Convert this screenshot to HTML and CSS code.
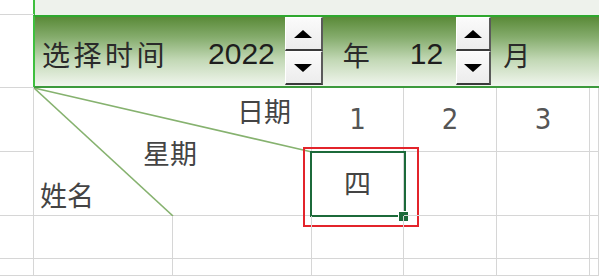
FILE: index.html
```html
<!DOCTYPE html>
<html lang="zh">
<head>
<meta charset="utf-8">
<link rel="stylesheet" href="styles.css">
</head>
<body>
<div class="sheet">
  <div class="cell gutter top"></div>
  <div class="topstrip"></div>

  <div class="cell gutter top"></div>
  <div class="band">
    <span class="label">选择时间</span>
    <span class="num year">2022</span>
    <div class="spin">
      <div class="btn"><span class="tri up"></span></div>
      <div class="btn"><span class="tri down"></span></div>
    </div>
    <span class="unit nian">年</span>
    <span class="num month">12</span>
    <div class="spin">
      <div class="btn"><span class="tri up"></span></div>
      <div class="btn"><span class="tri down"></span></div>
    </div>
    <span class="unit yue">月</span>
  </div>

  <div class="cell gutter"></div>
  <div class="cell diag">
    <svg class="lines" width="278" height="128" viewBox="0 0 278 128">
      <line x1="0" y1="0" x2="278" y2="64" />
      <line x1="0" y1="0" x2="139" y2="128" />
    </svg>
    <span class="htext ri">日期</span>
    <span class="htext xq">星期</span>
    <span class="htext xm">姓名</span>
  </div>
  <div class="cell day">1</div>
  <div class="cell day">2</div>
  <div class="cell day">3</div>
  <div class="cell"></div>

  <div class="cell gutter"></div>
  <div class="cell selected">
    <span class="val">四</span>
    <div class="redbox"></div>
    <div class="selbox"></div>
    <div class="handle"></div>
  </div>
  <div class="cell"></div>
  <div class="cell"></div>
  <div class="cell"></div>

  <div class="cell gutter"></div>
  <div class="cell"></div>
  <div class="cell"></div>
  <div class="cell"></div>
  <div class="cell"></div>
  <div class="cell"></div>
  <div class="cell"></div>

  <div class="cell gutter"></div>
  <div class="cell"></div>
  <div class="cell"></div>
  <div class="cell"></div>
  <div class="cell"></div>
  <div class="cell"></div>
  <div class="cell"></div>
</div>
</body>
</html>
```

FILE: styles.css
```css
html, body {
  margin: 0;
  padding: 0;
  background: #ffffff;
}

.sheet {
  width: 599px;
  height: 276px;
  overflow: hidden;
  display: grid;
  grid-template-columns: 34px 139px 139px 92px 93px 93px 9px;
  grid-template-rows: 15px 73px 64px 64px 43px 17px;
  font-family: "Noto Sans CJK SC", "Noto Sans", sans-serif;
  color: #444;
}

.cell {
  box-sizing: border-box;
  border-right: 1px solid #d6d6d6;
  border-bottom: 1px solid #d6d6d6;
  position: relative;
}

.gutter.top {
  border-right: none;
}

.topstrip {
  grid-column: 2 / 8;
  background: #eef2ec;
  border-left: 2px solid #3fbf3f;
  margin-left: -1px;
}

.band {
  grid-column: 2 / 8;
  box-sizing: border-box;
  margin-left: -1px;
  border-left: 2px solid #3fbf3f;
  border-top: 2px solid #2ea82e;
  border-bottom: 2px solid #3d9a3d;
  background: linear-gradient(#5a8a38 0%, #86ad6e 30%, #c2d8b5 62%, #f1f6ee 100%);
  display: flex;
  align-items: center;
  padding-top: 5px;
  color: #222;
}

.label {
  font-size: 28px;
  letter-spacing: 3.5px;
  margin-left: 7px;
  line-height: 1;
  color: #2a2a2a;
}

.num {
  font-family: "Liberation Sans", Arial, sans-serif;
  font-size: 30px;
  line-height: 1;
  color: #1e1e1e;
}

.year {
  margin-left: 40px;
}

.month {
  margin-left: 40px;
}

.unit {
  font-size: 27px;
  line-height: 1;
  color: #2a2a2a;
}

.nian {
  margin-left: 20px;
}

.yue {
  margin-left: 12px;
}

.spin {
  align-self: flex-start;
  margin-top: -5px;
  display: flex;
  flex-direction: column;
  width: 38px;
  margin-left: 10px;
}

.month + .spin {
  margin-left: 13px;
  width: 35px;
}

.btn {
  box-sizing: border-box;
  height: 34px;
  background: linear-gradient(#fbfbfb, #ececec);
  border-top: 1px solid #ffffff;
  border-left: 1px solid #ffffff;
  border-right: 2px solid #5a5a5a;
  border-bottom: 2px solid #3a3a3a;
  display: flex;
  align-items: center;
  justify-content: center;
}

.tri {
  width: 0;
  height: 0;
  border-left: 9px solid transparent;
  border-right: 9px solid transparent;
}

.tri.up {
  border-bottom: 8px solid #000;
}

.tri.down {
  border-top: 8px solid #000;
}

.diag {
  grid-column: 2 / 4;
  grid-row: 3 / 5;
}

.lines {
  position: absolute;
  left: 0;
  top: 0;
}

.lines line {
  stroke: #86b26f;
  stroke-width: 1.6;
}

.htext {
  position: absolute;
  font-size: 27px;
  line-height: 1;
  color: #444;
}

.ri {
  left: 203px;
  top: 9px;
}

.xq {
  left: 109px;
  top: 51px;
}

.xm {
  left: 6px;
  top: 93px;
}

.day {
  font-family: "Liberation Sans Narrow", "DejaVu Sans Condensed", "Liberation Sans", sans-serif;
  font-size: 29px;
  color: #555;
  display: flex;
  justify-content: center;
  align-items: center;
  padding-bottom: 1px;
}

.selected {
  display: flex;
  justify-content: center;
  align-items: center;
}

.val {
  font-size: 27px;
  line-height: 1;
  color: #444;
  margin-top: -2px;
}

.selbox {
  position: absolute;
  left: -2px;
  top: -1px;
  width: 96px;
  height: 66px;
  box-sizing: border-box;
  border: 2px solid #1c6a3a;
}

.redbox {
  position: absolute;
  left: -9px;
  top: -5px;
  width: 116px;
  height: 80px;
  box-sizing: border-box;
  border: 2px solid #e3242b;
}

.handle {
  position: absolute;
  left: 86px;
  top: 59px;
  width: 9px;
  height: 9px;
  background: #1c6a3a;
  border: 1px solid #ffffff;
  box-sizing: content-box;
}
```
